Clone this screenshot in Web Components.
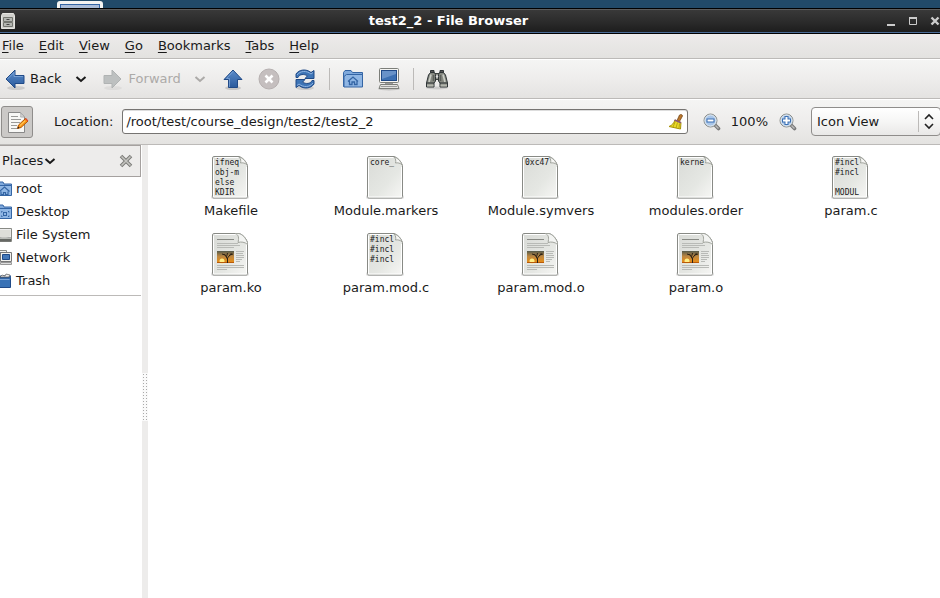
<!DOCTYPE html>
<html lang="en">
<head>
<meta charset="utf-8">
<title>test2_2 - File Browser</title>
<style>
  html, body { height: 100%; margin: 0; }
  body { overflow: hidden; background: #214a69; color: #1a1a1a; font: 13px/18px "DejaVu Sans", sans-serif; }
</style>
</head>
<body>
<fb-window>
  <title-bar slot="title">test2_2 - File Browser</title-bar>
  <menu-bar slot="menu"></menu-bar>
  <tool-bar slot="tools"></tool-bar>
  <location-bar slot="location"></location-bar>
  <places-pane slot="side">
    <place-item icon="home">root</place-item>
    <place-item icon="desktop">Desktop</place-item>
    <place-item icon="drive">File System</place-item>
    <place-item icon="network">Network</place-item>
    <place-item icon="trash">Trash</place-item>
  </places-pane>
  <icon-view slot="files">
    <file-item preview="ifneq|obj-m|else|KDIR">Makefile</file-item>
    <file-item preview="core_">Module.markers</file-item>
    <file-item preview="0xc47">Module.symvers</file-item>
    <file-item preview="kerne">modules.order</file-item>
    <file-item preview="#incl|#incl||MODUL">param.c</file-item>
    <file-item>param.ko</file-item>
    <file-item preview="#incl|#incl|#incl">param.mod.c</file-item>
    <file-item>param.mod.o</file-item>
    <file-item>param.o</file-item>
  </icon-view>
</fb-window>
<script>
const base = `
  :host, * { box-sizing: border-box; }
  button { font: inherit; color: inherit; background: none; border: 0; padding: 0; margin: 0; display: flex; align-items: center; white-space: nowrap; }
  svg { display: block; flex: none; }
`;

const ICONS = {
  back: `<svg width="24" height="24" viewBox="0 0 24 24"><ellipse cx="14" cy="21" rx="9" ry="2" fill="#000" opacity=".12"/><defs><linearGradient id="g" x2="0" y2="1"><stop stop-color="#5b8cca"/><stop offset="1" stop-color="#2a5a9c"/></linearGradient></defs><path d="M4 12l9-9v5.500h9v8h-9V21z" fill="url(#g)" stroke="#204a87" stroke-linejoin="round"/><path d="M5.500 12L12 5.500v4h9" fill="none" stroke="#86acdd" opacity=".7"/></svg>`,
  forward: `<svg width="24" height="24" viewBox="0 0 24 24"><ellipse cx="12" cy="21" rx="9" ry="2" fill="#000" opacity=".05"/><path d="M20 12l-9-9v5.500H3v8h8V21z" fill="#bdc0c0" stroke="#b0b3b3" stroke-linejoin="round"/></svg>`,
  up: `<svg width="24" height="24" viewBox="0 0 24 24"><ellipse cx="12" cy="21" rx="8" ry="2" fill="#000" opacity=".15"/><defs><linearGradient id="g" x2="0" y2="1"><stop stop-color="#5b8cca"/><stop offset="1" stop-color="#2a5a9c"/></linearGradient></defs><path d="M12 3l9 9.500h-4.500V20.500h-9v-8H3z" fill="url(#g)" stroke="#204a87" stroke-linejoin="round"/><path d="M12 4.500L5.500 11.500h3V20" fill="none" stroke="#86acdd" opacity=".7"/></svg>`,
  stop: `<svg width="24" height="24" viewBox="0 0 24 24"><circle cx="12" cy="12" r="10" fill="#c5bfbf" stroke="#b6b0b0"/><path d="M8.500 8.500l7 7m0-7l-7 7" stroke="#fff" stroke-width="2.600"/></svg>`,
  reload: `<svg width="24" height="24" viewBox="0 0 24 24"><ellipse cx="12" cy="21" rx="9" ry="2" fill="#000" opacity=".12"/><g id="half"><path d="M3 10.500V7C6 2.500 13 1.500 18 5.500L21 3.500V11.500H12l2.500-2.700C11 6.800 6.500 7 5 10.500z" fill="#3d74b6" stroke="#204a87" stroke-linejoin="round"/><path d="M4 8C7.500 3.500 13.500 3.500 18 7L20 5.500" fill="none" stroke="#8db2e0"/></g><use href="#half" transform="rotate(180 12 12)"/></svg>`,
  homeFolder: `<svg width="24" height="24" viewBox="0 0 24 24"><path d="M2.500 19.500V5.500l1.500-2h6l1.500 2h10v14z" fill="#7fa9dc" stroke="#3465a4"/><path d="M3 20V9.500L5.500 7.500h16v12.500z" fill="#8fb6e4" stroke="#3465a4"/><path d="M7 14.500l5-4.500 5 4.500M8.500 14v3.500h2.500v-2.500h2.500v2.500h2.500v-3.500" fill="none" stroke="#3465a4" stroke-width="1.300"/></svg>`,
  computer: `<svg width="24" height="24" viewBox="0 0 24 24"><ellipse cx="12" cy="22" rx="11" ry="1.500" fill="#000" opacity=".15"/><rect x="2.500" y="1.500" width="19" height="14" rx="1" fill="#f5f5f2" stroke="#7c7e79"/><rect x="4.500" y="3.500" width="15" height="10" fill="#3c70b2" stroke="#204a87"/><path d="M5 4h14v3L5 12z" fill="#7fa5d4" opacity=".65"/><path d="M8 16h8v2H8z" fill="#999"/><path d="M3.500 17.500h17l1.500 4H2z" fill="#e4e4e0" stroke="#7c7e79"/><path d="M4 19.500h16" stroke="#999"/></svg>`,
  find: `<svg width="24" height="24" viewBox="0 0 24 24"><ellipse cx="12" cy="21" rx="11" ry="1.500" fill="#000" opacity=".12"/><path d="M9.500 6.500h5v6h-5z" fill="#8d9088" stroke="#3f4341"/><g id="tube"><path d="M5.500 5.500h4l1 2v6.500l-1.500 2v4h-7.500v-4l2-8z" fill="#858880" stroke="#2e3436" stroke-linejoin="round"/><path d="M5.500 3.500h3.500v2h-3.500z" fill="#555" stroke="#2e3436"/><path d="M6 7.500L4 15" stroke="#c9ccc4" stroke-width="1.600"/><path d="M8.500 8v6" stroke="#5b5f5a" stroke-width="1.500"/><path d="M2 17.500h6.500v2H2z" fill="#b4b7ae"/><path d="M2 16h7" stroke="#2e3436"/></g><use href="#tube" transform="matrix(-1 0 0 1 24 0)"/><circle cx="12" cy="9.500" r="1.200" fill="#ddd"/></svg>`,
  chevron: `<svg width="12" height="12" viewBox="0 0 12 12"><path d="M1.500 4l4.500 4 4.500-4" fill="none" stroke="currentColor" stroke-width="2"/></svg>`,
  edit: `<svg width="24" height="24" viewBox="0 0 24 24"><path d="M3.500 2.500h12l4 4.500v15.500h-16z" fill="#f8f8f6" stroke="#888"/><path d="M15.500 2.500c1 2 0 4 0 4.500h4z" fill="#ddd" stroke="#aaa"/><path d="M6 6.500h7M6 9.500h10M6 12.500h9M6 15.500h6M6 18.500h8" stroke="#9a9a98"/><path d="M12.500 18.500l1-3.500 7-6.500 2.500 2.500-7 6.500z" fill="#fc9b1c" stroke="#b25400"/><path d="M20 9l1-.9 2.300 2.400-.9.900z" fill="#e0472c"/><path d="M15 15.500l5-4.700" stroke="#ffd76b"/><path d="M12.500 18.500l.7-2 1.300 1.300z" fill="#222"/></svg>`,
  broom: `<svg width="16" height="16" viewBox="0 0 16 16"><path d="M9 6.500L11.500 1c1-1 3-.5 3 1L11.500 7.500z" fill="#b9772e" stroke="#704010" stroke-width=".7"/><path d="M7 6l6 2.500-.5 6.500L1 12.500C4 11.500 6 9 7 6z" fill="#eadb28" stroke="#a89106"/><path d="M7.300 7.500L5 13m4.500-4.500L8 14m3.500-4.500L11 14" stroke="#ad980c" stroke-width=".8"/><path d="M6.500 6l6.500 2.700" stroke="#8a557b" stroke-width="1.500"/></svg>`,
  zoomOut: `<svg width="18" height="18" viewBox="0 0 18 18"><path d="M11.500 11.500l4 4" stroke="#777" stroke-width="3.600" stroke-linecap="round"/><path d="M12.500 12.500l3 3" stroke="#bbb" stroke-width="1.400"/><circle cx="7.500" cy="7.500" r="6.500" fill="#a9c6e9" stroke="#8b8d89"/><circle cx="7.500" cy="7.500" r="5.500" fill="none" stroke="#e2e9ee"/><path d="M3.500 5.500h8v4h-8z" fill="#3b6fb2"/><path d="M4.500 7.500h6" stroke="#fff" stroke-width="2"/></svg>`,
  zoomIn: `<svg width="18" height="18" viewBox="0 0 18 18"><path d="M11.500 11.500l4 4" stroke="#777" stroke-width="3.600" stroke-linecap="round"/><path d="M12.500 12.500l3 3" stroke="#bbb" stroke-width="1.400"/><circle cx="7.500" cy="7.500" r="6.500" fill="#a9c6e9" stroke="#8b8d89"/><circle cx="7.500" cy="7.500" r="5.500" fill="none" stroke="#e2e9ee"/><path d="M3 7.500h9M7.500 3v9" stroke="#3b6fb2" stroke-width="4"/><path d="M4 7.500h7M7.500 4v7" stroke="#fff" stroke-width="2"/></svg>`,
  close: `<svg width="14" height="14" viewBox="0 0 14 14"><path d="M2 2l10 10M12 2L2 12" stroke="#7b7b78" stroke-width="3.600"/><path d="M2.500 2.500l9 9m0-9l-9 9" stroke="#c4c4c0" stroke-width="1.600"/></svg>`,
  home: `<svg width="16" height="16" viewBox="0 0 16 16"><path d="M.5 13.500v-11l1-1.500H7l1 2h7.500v10.500z" fill="#7fa9dc" stroke="#3465a4"/><path d="M.5 14.500V6L3 4.500h12.500v10z" fill="#8fb6e4" stroke="#3465a4"/><path d="M3.500 10.500L8.500 6l5 4.500M5 10.500v3h2.500v-2h2v2H12v-3" fill="none" stroke="#3465a4" stroke-width="1.200"/></svg>`,
  desktop: `<svg width="16" height="16" viewBox="0 0 16 16"><path d="M.5 13.500v-11l1-1.500H7l1 2h7.500v10.500z" fill="#7fa9dc" stroke="#3465a4"/><path d="M.5 14.500V6L3 4.500h12.500v10z" fill="#8fb6e4" stroke="#3465a4"/><path d="M5.500 8.500V7.500H6.500M12 7.500H13V8.500M13 11.500v1h-1M6.500 12.500H5.500V11.500" fill="none" stroke="#3465a4"/><rect x="7.500" y="8.500" width="3" height="3" fill="none" stroke="#3465a4"/></svg>`,
  drive: `<svg width="16" height="16" viewBox="0 0 16 16"><path d="M2.500 1.500h13v13H.5v-4z" fill="#eee" stroke="#888a85"/><path d="M1 10.500h14v4H1z" fill="#666864"/><path d="M4 3h10.500v6C11 11 5 11 1.500 9z" fill="#deded9"/><path d="M2 11.500h13" stroke="#b9bbb6"/></svg>`,
  network: `<svg width="16" height="16" viewBox="0 0 16 16"><path d="M.5 .5h10v8H.5z" fill="#f2f2ef" stroke="#888a85"/><path d="M2 2h7v5H2z" fill="#3465a4"/><path d="M4.500 2.500h11v9h-11z" fill="#f2f2ef" stroke="#777"/><path d="M6.500 4.500h7v5h-7z" fill="#4478b8" stroke="#204a87"/><path d="M4.500 12.500h11v2h-11z" fill="#ddd" stroke="#999"/></svg>`,
  trash: `<svg width="16" height="16" viewBox="0 0 16 16"><path d="M1.500 4.500h13v10h-13z" fill="#3972b6" stroke="#204a87"/><path d="M1 2.500h14v3H1z" fill="#2f5d99"/><path d="M4 4l2-2 3 1 1-2 4 1-1 2z" fill="#eee" stroke="#555" stroke-width=".7"/><path d="M2.500 6.500h11" stroke="#7ea6d8"/></svg>`,
  cabinet: `<svg width="14" height="16" viewBox="0 0 14 16"><path d="M1.500 .5h11l1 2v13H.5v-13z" fill="#d0d0cc" stroke="#e4e4e0"/><path d="M2.500 4.500h9v4h-9zM2.500 9.500h9v4h-9z" fill="#b4b6b1" stroke="#73756f"/><path d="M5.500 6.500h3M5.500 11.500h3" stroke="#444"/></svg>`,
  page: `<svg width="40" height="46" viewBox="0 0 40 46"><defs><linearGradient id="p" x2="1" y2="1"><stop stop-color="#d9dbd7"/><stop offset=".6" stop-color="#e5e7e3"/><stop offset="1" stop-color="#f7f7f5"/></linearGradient></defs><rect x="1" y="40" width="38" height="4" rx="2" fill="#000" opacity=".13"/><path d="M4 1.500h25c3.500 1 6.500 4 8.500 9v31c0 1-.5 1.500-1.500 1.500H4c-1 0-1.500-.5-1.500-1.500V3c0-1 .5-1.500 1.500-1.500z" fill="url(#p)" stroke="#888a85"/><path d="M4.500 2.500h24M3.500 3.500v38.500h33V12" fill="none" stroke="#fff"/><path d="M29 2c2 2 2 4 1.500 6 2-.5 5 0 6.500 2-1-4-4-7-8-8z" fill="#f6f6f4" stroke="#a1a49d"/></svg>`,
  art: `<svg width="40" height="46" viewBox="0 0 40 46"><defs><linearGradient id="s" x2="0" y2="1"><stop stop-color="#555a4c"/><stop offset=".45" stop-color="#bd8740"/><stop offset="1" stop-color="#ec8e13"/></linearGradient></defs><path d="M25 1.500c4 1 4 5 3 9 3-1 7-.5 9.500 2v-2c-2-5-5-8-8.500-9z" fill="#f3f4f2" stroke="#a1a49d"/><path d="M7 7.500h17" stroke="#888a85"/><path d="M7 11.500h21M7 13.500h23M7 15.500h17M26 19.500h8M26 21.500h7M26 23.500h8M26 25.500h8M26 27.500h6M26 29.500h4M7 33.500h27M7 35.500h27M7 37.500h10" stroke="#b8bab6"/><rect x="7" y="19" width="17" height="12" fill="url(#s)"/><circle cx="12" cy="29" r="2.500" fill="#ffed84"/><path d="M7 30.500h17" stroke="#b95a08"/><path d="M17.500 31v-5M17.500 27l-3-5M17.500 26l4-5M15 23l-3-1M20 23l3-1M16.500 25l1-4" stroke="#2b2115" fill="none"/></svg>`
};

function define(name, markup, setup) {
  const template = document.createElement("template");
  customElements.define(name, class extends HTMLElement {
    constructor() {
      super();
      this.attachShadow({ mode: "open" });
    }
    connectedCallback() {
      if (this.shadowRoot.childNodes.length) return;
      template.innerHTML = `<style>${base}</style>` + markup;
      this.shadowRoot.append(template.content.cloneNode(true));
      if (setup) setup(this, this.shadowRoot);
    }
  });
}

define("fb-window", `
  <style>
    :host { display: flex; flex-direction: column; height: 100vh; }
    .desk { height: 8px; flex: none; padding-left: 57px; overflow: hidden; }
    .launcher { width: 46px; height: 20px; border: 3px solid #f4f4f2; border-radius: 3px; background: #a9bcd8; box-shadow: inset 0 0 0 1px #3465a4; margin-top: 1px; }
    .body { flex: 1; display: flex; min-height: 0; background: #fff; }
    .grip { width: 6px; background: #edeceb; display: flex; align-items: center; justify-content: center; padding-top: 50px; margin-left: 1px; }
    .grip i { width: 6px; height: 48px; background: radial-gradient(circle, #aaa 0 1px, #fafafa 1px) 0 0 / 3px 3px; }
    ::slotted(icon-view) { flex: 1; }
  </style>
  <div class="desk"><div class="launcher"></div></div>
  <slot name="title"></slot><slot name="menu"></slot><slot name="tools"></slot><slot name="location"></slot>
  <div class="body"><slot name="side"></slot><div class="grip"><i></i></div><slot name="files"></slot></div>
`);

define("title-bar", `
  <style>
    :host { display: grid; grid-template-columns: 1fr auto 1fr; align-items: center; height: 26px; flex: none; padding: 0 0 0 1px; color: #fff; font-weight: bold;
      background: linear-gradient(#3a3a3a, #2c2c2c 50%, #1c1c1c); border-top: 1px solid #000; border-bottom: 1px solid #000; box-shadow: inset 0 1px #5c5c5c, inset 0 -1px #4a6b96; }
    h1 { font: inherit; margin: 0 0 0 -44px; }
    .controls { display: flex; justify-content: flex-end; gap: 8px; margin-right: -2px; }
  </style>
  ${ICONS.cabinet}<h1><slot></slot></h1>
  <div class="controls">
    <button aria-label="Minimize"><svg width="14" height="14"><path d="M3 11h8" stroke="#ccc" stroke-width="2"/></svg></button>
    <button aria-label="Maximize"><svg width="14" height="14"><path d="M3.500 4v6.500h7V4" fill="none" stroke="#ccc"/><path d="M3 4h8" stroke="#ccc" stroke-width="2"/></svg></button>
    <button aria-label="Close"><svg width="14" height="14"><path d="M3.500 3.500l7 7m0-7l-7 7" stroke="#ccc" stroke-width="2.400"/></svg></button>
  </div>
`);

define("menu-bar", `
  <style>
    :host { display: block; flex: none; background: linear-gradient(#edebea, #e3e2e0); border-bottom: 1px solid #bcbab8; }
    nav { display: flex; gap: 15px; height: 24px; padding-left: 2px; }
    u { text-underline-offset: 2px; }
  </style>
  <nav>${["File", "Edit", "View", "Go", "Bookmarks", "Tabs", "Help"].map(t => `<button><span><u>${t[0]}</u>${t.slice(1)}</span></button>`).join("")}</nav>
`);

define("tool-bar", `
  <style>
    :host { display: flex; align-items: center; gap: 12px; height: 40px; flex: none; padding-left: 2px;
      background: linear-gradient(#f5f5f4, #eeedec 50%, #e4e3e1); border-bottom: 1px solid #bcbab8; box-shadow: inset 0 1px #fff; }
    .go { display: flex; align-items: center; gap: 13px; margin-right: 2px; }
    .go button:first-child { gap: 4px; }
    .off { color: #acaaa8; text-shadow: 1px 1px #fff; margin-right: 3px; }
    hr { width: 1px; height: 22px; margin: 0 -1px 0 0; border: 0; background: #bcbab8; }
  </style>
  <div class="go"><button>${ICONS.back}Back</button><button aria-label="Back history">${ICONS.chevron}</button></div>
  <div class="go off"><button disabled>${ICONS.forward}Forward</button><button disabled aria-label="Forward history">${ICONS.chevron}</button></div>
  <button aria-label="Up">${ICONS.up}</button>
  <button aria-label="Stop" disabled>${ICONS.stop}</button>
  <button aria-label="Reload">${ICONS.reload}</button>
  <hr>
  <button aria-label="Home">${ICONS.homeFolder}</button>
  <button aria-label="Computer">${ICONS.computer}</button>
  <hr>
  <button aria-label="Search">${ICONS.find}</button>
`);

define("location-bar", `
  <style>
    :host { display: flex; align-items: center; height: 46px; flex: none; padding-left: 1px;
      background: linear-gradient(#f5f5f4, #eeedec 50%, #e4e3e1); border-bottom: 1px solid #bcbab8; box-shadow: inset 0 1px #fff; }
    .toggle { width: 32px; height: 32px; justify-content: center; border: 1px solid #8f8d8b; border-radius: 3px; background: #cbc9c7; margin-right: 21px; }
    .field { flex: 1; display: flex; align-items: center; height: 25px; margin: 0 15px 0 9px; padding: 0 3px; border: 1px solid #767472; border-radius: 3px; background: #fff; box-shadow: inset 0 1px #ddd; }
    input { flex: 1; min-width: 0; border: 0; padding: 0; outline: 0; background: none; font: inherit; color: inherit; }
    output { margin: 0 11px 0 10px; }
    .view { display: grid; align-items: center; margin: 0 -1px 0 14px; width: 130px; height: 29px; }
    .view > * { grid-area: 1 / 1; }
    select { appearance: none; width: 100%; height: 100%; font: inherit; color: inherit; padding: 0 24px 0 5px; border: 1px solid #8f8d8b; border-radius: 4px; background: linear-gradient(#fff, #f6f6f5 50%, #e9e8e7); }
    .view svg { justify-self: end; pointer-events: none; }
  </style>
  <button class="toggle" aria-label="Edit location" aria-pressed="true">${ICONS.edit}</button>
  <label for="path">Location:</label>
  <div class="field"><input id="path" value="/root/test/course_design/test2/test2_2"><button aria-label="Clear">${ICONS.broom}</button></div>
  <button aria-label="Zoom out">${ICONS.zoomOut}</button>
  <output>100%</output>
  <button aria-label="Zoom in">${ICONS.zoomIn}</button>
  <div class="view"><select aria-label="View"><option>Icon View</option><option>List View</option></select>
    <svg width="24" height="21"><path d="M1.500 0v21" stroke="#bcbab8"/><path d="M8 8l4-4 4 4M8 13l4 4 4-4" fill="none" stroke="#222" stroke-width="1.600"/></svg></div>
`);

define("places-pane", `
  <style>
    :host { display: block; width: 141px; flex: none; overflow: hidden; background: #fff; }
    header { display: flex; align-items: center; justify-content: space-between; height: 32px; padding: 0 7px 0 2px; background: #edeceb; border: solid #a5a19f; border-width: 1px 1px 1px 0; }
    header button { gap: 1px; }
    .list { margin-left: -4px; padding-bottom: 3px; border-bottom: 1px solid #bcbab8; }
  </style>
  <header><button>Places${ICONS.chevron}</button><button aria-label="Close places">${ICONS.close}</button></header>
  <div class="list"><slot></slot></div>
`);

define("place-item", `
  <style>
    :host { display: block; }
    button { width: 100%; height: 23px; gap: 4px; }
  </style>
  <button><span id="icon"></span><slot></slot></button>
`, (host, root) => { root.getElementById("icon").innerHTML = ICONS[host.getAttribute("icon")]; });

define("icon-view", `
  <style>
    :host { display: grid; grid-template-columns: repeat(auto-fill, 155px); grid-auto-rows: 77px; align-content: start; padding: 10px 0 0 5px; background: #fff; min-width: 0; }
  </style>
  <slot></slot>
`);

define("file-item", `
  <style>
    :host { display: flex; flex-direction: column; align-items: center; }
    .thumb { display: grid; width: 41px; height: 46px; }
    .thumb > * { grid-area: 1 / 1; }
    .text { padding: 3px 0 0 5px; font: 8px/10px "DejaVu Sans Mono", monospace; white-space: pre; }
    .name { margin-top: 1px; padding-left: 1px; }
  </style>
  <div class="thumb">${ICONS.page}<span class="text"></span></div>
  <span class="name"><slot></slot></span>
`, (host, root) => {
  const text = root.querySelector(".text");
  if (host.hasAttribute("preview")) text.textContent = host.getAttribute("preview").split("|").join("\n");
  else text.outerHTML = ICONS.art;
});
</script>
</body>
</html>
